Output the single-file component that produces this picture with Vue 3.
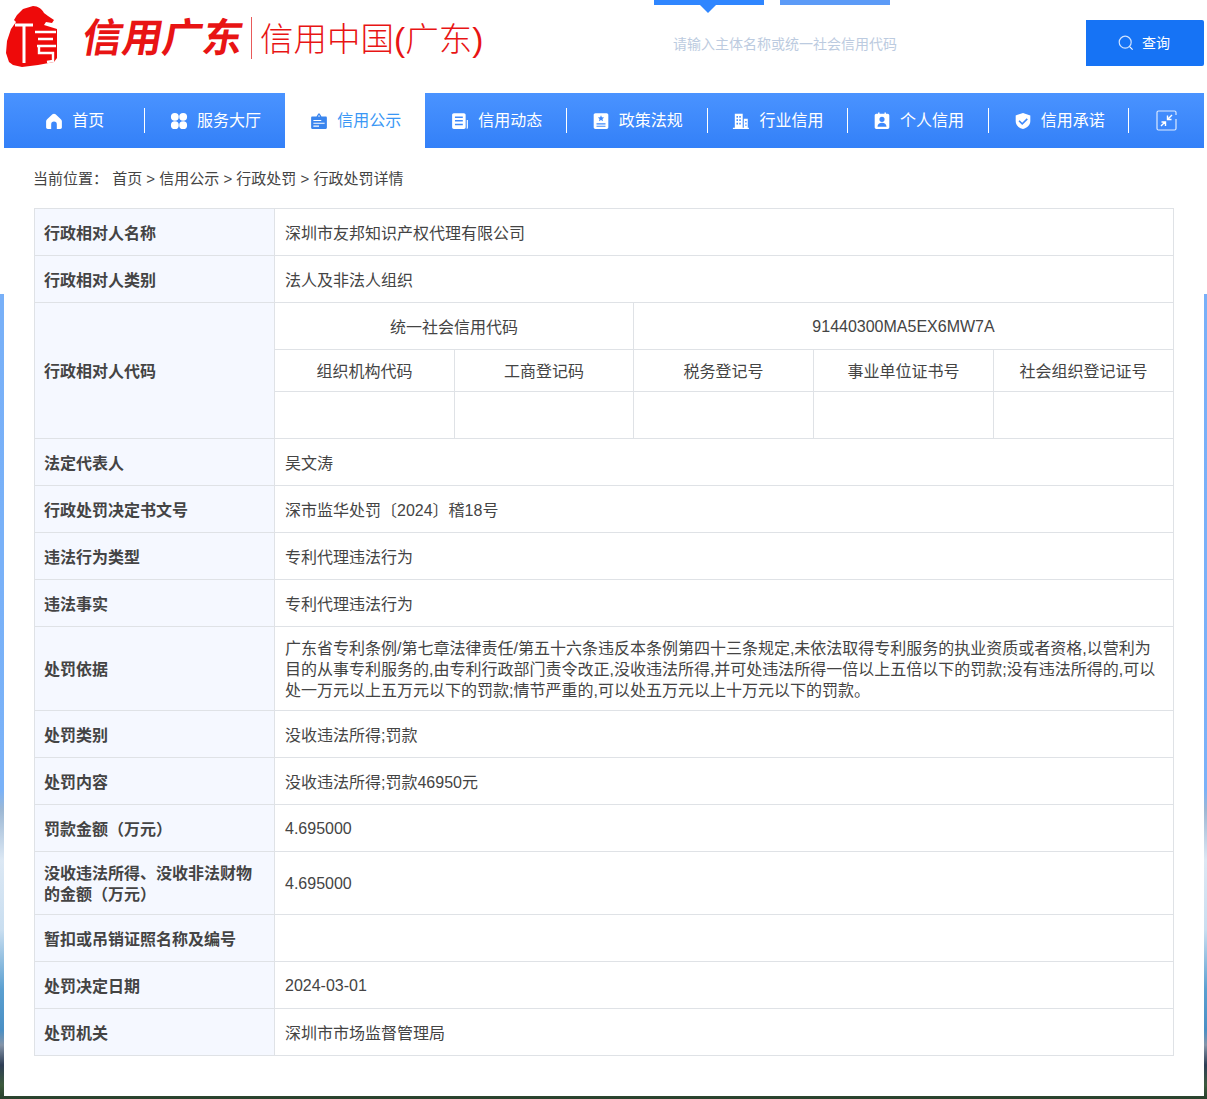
<template>
  <div class="page">
    <div class="main">
      <header class="top">
        <div class="logo">
          <svg class="seal" viewBox="0 0 54 62" width="54" height="62">
            <path fill="#ee0a0a" d="M28 1c5 0 9 3 11 7l4 3 6 4-2 3-6-1-2 3 13 4v29l-3 4-16 3-16 2-9-2-4-3-3-9 1-12 4-12 5-7-2-2 3-5 6-6z" />
            <path fill="none" stroke="#fff" stroke-width="3" d="M10 20h18M19 20v38" />
            <path fill="none" stroke="#fff" stroke-width="2.4" d="M30 27h21M33 34h15M32 41h19M34 41v7h14v8l-6 1" />
          </svg>
          <span class="logo-brush">信用广东</span>
          <span class="logo-line"></span>
          <span class="logo-name">信用中国(广东)</span>
        </div>
        <div class="search">
          <div class="search-tabs">
            <span class="tab tab-on"></span>
            <span class="tab"></span>
          </div>
          <input class="search-input" type="text" placeholder="请输入主体名称或统一社会信用代码" />
        </div>
        <button class="search-btn" type="button">
          <svg viewBox="0 0 16 16" width="16" height="16" fill="none" stroke="#fff" stroke-width="1.2">
            <circle cx="7.2" cy="7.2" r="6" stroke="#cfe2ff" />
            <path d="M11.6 11.6l3 3" />
          </svg>
          <span class="btn-text">查询</span>
        </button>
      </header>

      <nav class="nav">
        <a v-for="item in navItems" :key="item.name" class="nav-item" :class="{ active: item.active, split: item.split }">
          <svg class="nav-icon" viewBox="0 0 16 16" width="18" height="18">
            <path :d="item.icon" fill="currentColor" fill-rule="evenodd" />
          </svg>
          <span class="nav-text">{{ item.name }}</span>
        </a>
        <a class="nav-item nav-fold">
          <svg viewBox="0 0 21 21" width="21" height="21" fill="none" stroke="#dbe9ff" stroke-width="1.2">
            <path d="M20 9v9.5a1.5 1.5 0 0 1-1.500 1.500h-16a1.500 1.500 0 0 1-1.500-1.500v-16a1.500 1.500 0 0 1 1.500-1.500h16a1.500 1.500 0 0 1 1.500 1.500v2.500" />
            <path stroke="#fff" stroke-width="1.400" d="M16 5l-4 4M11.500 5.500v4h4M5 16l4-4M5.500 12h4v4" />
          </svg>
        </a>
      </nav>

      <section class="content">
        <div class="crumb">当前位置： 首页 &gt; 信用公示 &gt; 行政处罚 &gt; 行政处罚详情</div>
        <table class="detail">
          <colgroup>
            <col class="col-label" />
            <col class="col-cell" />
            <col class="col-narrow" />
            <col class="col-cell" />
            <col class="col-cell" />
            <col class="col-cell" />
          </colgroup>
          <tbody>
            <tr v-for="row in topRows" :key="row.label">
              <th>{{ row.label }}</th>
              <td colspan="5">{{ row.value }}</td>
            </tr>
            <tr>
              <th rowspan="3">行政相对人代码</th>
              <td colspan="2" class="center">统一社会信用代码</td>
              <td colspan="3" class="center num">91440300MA5EX6MW7A</td>
            </tr>
            <tr class="short">
              <td v-for="name in codeNames" :key="name" class="center">{{ name }}</td>
            </tr>
            <tr>
              <td v-for="name in codeNames" :key="name"></td>
            </tr>
            <tr v-for="row in restRows" :key="row.label">
              <th>{{ row.label }}</th>
              <td colspan="5" :class="{ num: row.num }">{{ row.value }}</td>
            </tr>
          </tbody>
        </table>
      </section>
    </div>
  </div>
</template>

<script setup>
const navItems = [
  { name: '首页', split: true, icon: 'M8 1.500c.5 0 1 .2 1.400.6l4.700 4.300c.6.5.9 1.100.9 1.900v5.200c0 .8-.6 1.500-1.500 1.500h-3v-4a2.500 2.500 0 0 0-5 0v4h-3c-.9 0-1.500-.7-1.500-1.500V8.300c0-.8.300-1.400.9-1.900l4.700-4.300c.4-.4.900-.6 1.400-.6z' },
  { name: '服务大厅', icon: 'M4.300 .8a3.500 3.500 0 1 1 0 7 3.500 3.500 0 0 1 0-7zM11.700 .8a3.500 3.500 0 1 1 0 7 3.500 3.500 0 0 1 0-7zM4.300 8.200a3.500 3.500 0 1 1 0 7 3.500 3.500 0 0 1 0-7zM11.700 8.200a3.500 3.500 0 1 1 0 7 3.500 3.500 0 0 1 0-7z' },
  { name: '信用公示', active: true, icon: 'M8 .8l1.300 1.700.9 1.500h3.800c.6 0 1 .4 1 1v9c0 .6-.4 1-1 1H2c-.6 0-1-.4-1-1V5c0-.6.4-1 1-1h3.800l.9-1.500zM8 2.600L7 4h2zM3 7v1h7V7zm0 2.500v1h10v-1zm0 2.500v1h5v-1z' },
  { name: '信用动态', split: true, icon: 'M2.500 1h9c.8 0 1.500.7 1.500 1.500v11c0 .8-.7 1.500-1.500 1.500h-9c-.8 0-1.500-.7-1.500-1.500v-11C1 1.700 1.700 1 2.500 1zM3.500 4v1.300h7V4zm0 3.200v1.300h7V7.200zm0 3.200v1.300h7v-1.300zM14 7h1v7c0 .6-.4 1-1 1z' },
  { name: '政策法规', split: true, icon: 'M3 1h10c.8 0 1.500.7 1.500 1.500v11c0 .8-.7 1.500-1.500 1.500H3c-.8 0-1.500-.7-1.500-1.500v-11C1.500 1.700 2.200 1 3 1zM8 2.800l.8 1.900 2 .2-1.500 1.300.5 2L8 7.200l-1.800 1 .5-2-1.500-1.300 2-.2zM4 10v1h8v-1zm0 2.200v1h8v-1z' },
  { name: '行业信用', split: true, icon: 'M2.500 1.500h7v12.500h1V6h3.500v8h1v1.200H.8V14h1.700zM4 3.500v1.500h1.300V3.500zm2.500 0v1.500h1.300V3.500zM4 6.500V8h1.300V6.500zm2.500 0V8h1.300V6.500zM4 9.500V11h1.300V9.500zm2.500 0V11h1.300V9.500zM11.700 8v1.300H13V8zm0 3v1.300H13V11z' },
  { name: '个人信用', split: true, icon: 'M3 1.500h1.500V.5h1.300v1h4.400v-1h1.300v1H13c.8 0 1.500.7 1.500 1.500v10.500c0 .8-.7 1.500-1.500 1.500H3c-.8 0-1.500-.7-1.500-1.500V3c0-.8.700-1.500 1.500-1.500zM8 4.200a2.300 2.300 0 1 0 0 4.600 2.300 2.300 0 0 0 0-4.600zM4 13h8c0-2.200-1.800-3.500-4-3.500S4 10.800 4 13z' },
  { name: '信用承诺', split: true, icon: 'M8 .8l6.500 2.200v5c0 3.500-2.600 6-6.500 7.200C4.100 14 1.500 11.500 1.500 8V3zM11.300 5.600L7.300 9.500 5 7.300 4 8.300l3.300 3.200 5-4.900z' }
]

const topRows = [
  { label: '行政相对人名称', value: '深圳市友邦知识产权代理有限公司' },
  { label: '行政相对人类别', value: '法人及非法人组织' }
]

const codeNames = ['组织机构代码', '工商登记码', '税务登记号', '事业单位证书号', '社会组织登记证号']

const restRows = [
  { label: '法定代表人', value: '吴文涛' },
  { label: '行政处罚决定书文号', value: '深市监华处罚〔2024〕稽18号' },
  { label: '违法行为类型', value: '专利代理违法行为' },
  { label: '违法事实', value: '专利代理违法行为' },
  { label: '处罚依据', value: '广东省专利条例/第七章法律责任/第五十六条违反本条例第四十三条规定,未依法取得专利服务的执业资质或者资格,以营利为目的从事专利服务的,由专利行政部门责令改正,没收违法所得,并可处违法所得一倍以上五倍以下的罚款;没有违法所得的,可以处一万元以上五万元以下的罚款;情节严重的,可以处五万元以上十万元以下的罚款。' },
  { label: '处罚类别', value: '没收违法所得;罚款' },
  { label: '处罚内容', value: '没收违法所得;罚款46950元' },
  { label: '罚款金额（万元）', value: '4.695000', num: true },
  { label: '没收违法所得、没收非法财物的金额（万元）', value: '4.695000', num: true },
  { label: '暂扣或吊销证照名称及编号', value: '' },
  { label: '处罚决定日期', value: '2024-03-01', num: true },
  { label: '处罚机关', value: '深圳市市场监督管理局' }
]
</script>

<style scoped>
.page {
  min-height: 1099px;
  padding: 0 3px 3px 4px;
  box-sizing: border-box;
  font-family: "Liberation Sans", "Noto Sans CJK SC", sans-serif;
  color: #444;
  background: linear-gradient(180deg, #fff 0, #fff 294px, #78b0f8 294px, #7ab2f8 790px, #9db8d4 810px, #dce8f4 860px, #c9def0 930px, #5a9fd0 990px, #4a8fc4 1030px, #8494a8 1045px, #2e3e55 1065px, #3c5a3c 1085px, #28402c 1099px);
}

.main {
  background: #fff;
}

.top {
  display: flex;
  height: 93px;
}

.logo {
  width: 650px;
  height: 78px;
  display: flex;
  align-items: center;
  padding-left: 1px;
  box-sizing: border-box;
  color: #e81414;
}

.seal {
  flex: none;
  margin-top: -7px;
}

.logo-brush {
  width: 160px;
  margin-left: 24px;
  font-size: 40px;
  line-height: 44px;
  font-weight: 700;
  white-space: nowrap;
  transform: skewX(-10deg);
  margin-top: -3px;
}

.logo-line {
  width: 1px;
  height: 42px;
  margin: -3px 8px 0 8px;
  background: #e85a5a;
}

.logo-name {
  font-size: 33.500px;
  line-height: 40px;
  font-weight: 300;
  white-space: nowrap;
  margin-top: 1px;
}

.search {
  width: 432px;
}

.search-tabs {
  display: flex;
  gap: 16px;
}

.tab {
  position: relative;
  width: 110px;
  height: 5px;
  background: #5c9bf7;
}

.tab-on {
  background: #2f86ff;
}

.tab-on::after {
  content: "";
  position: absolute;
  left: 46px;
  top: 5px;
  border-left: 8px solid transparent;
  border-right: 8px solid transparent;
  border-top: 8px solid #2f86ff;
}

.search-input {
  display: block;
  width: 100%;
  height: 48px;
  margin-top: 15px;
  padding: 0 0 0 19px;
  box-sizing: border-box;
  border: 0;
  outline: 0;
  background: transparent;
  font-family: inherit;
  font-size: 14px;
}

.search-input::placeholder {
  color: #bccbe0;
  opacity: 1;
}

.search-btn {
  display: flex;
  align-items: center;
  justify-content: center;
  gap: 8px;
  width: 118px;
  height: 46px;
  margin-top: 20px;
  padding: 0 2px 0 0;
  border: 0;
  border-radius: 0 2px 2px 0;
  background: #1673f5;
  color: #fff;
  font-family: inherit;
  font-size: 14px;
}

.btn-text {
  margin-bottom: 2px;
}

.nav {
  display: grid;
  grid-template-columns: repeat(8, 1fr) 75px;
  height: 55px;
  background: linear-gradient(180deg, #4a93ff 0%, #3380f8 100%);
}

.nav-item {
  position: relative;
  display: flex;
  align-items: center;
  justify-content: center;
  gap: 9px;
  padding-left: 1px;
  color: #fff;
  font-size: 16px;
}

.nav-fold {
  padding-left: 0;
}

.nav-text {
  margin-bottom: 4px;
}

.nav-item.split::after {
  content: "";
  position: absolute;
  right: -0.4px;
  top: 15px;
  width: 1px;
  height: 25px;
  background: #fff;
}

.nav-item.active {
  margin-right: 0.5px;
  background: #fff;
  color: #3a97f5;
}

.nav-item.active .nav-icon {
  color: #3a85ee;
}

.nav-icon {
  flex: none;
}

.content {
  padding: 0 30px 40px;
}

.crumb {
  height: 60px;
  margin-left: -1px;
  line-height: 62px;
  font-size: 15px;
  color: #444;
}

.detail {
  width: 1139px;
  table-layout: fixed;
  border-collapse: collapse;
  font-size: 16px;
  line-height: 21px;
}

.col-label {
  width: 240px;
}

.col-cell {
  width: 180px;
}

.col-narrow {
  width: 179px;
}

.detail tr {
  height: 47px;
}

.detail tr.short {
  height: 42px;
}

.detail th,
.detail td {
  padding: 11px 10px 9px;
  border: 1px solid #dfe2e6;
  text-align: left;
  word-break: break-all;
}

.detail th {
  padding-left: 9px;
  background: #f5f8ff;
  font-weight: 700;
  color: #444;
}

.detail td {
  font-weight: 400;
}

.detail td.num {
  padding-top: 10px;
  padding-bottom: 10px;
}

.detail td.center {
  text-align: center;
}
</style>
